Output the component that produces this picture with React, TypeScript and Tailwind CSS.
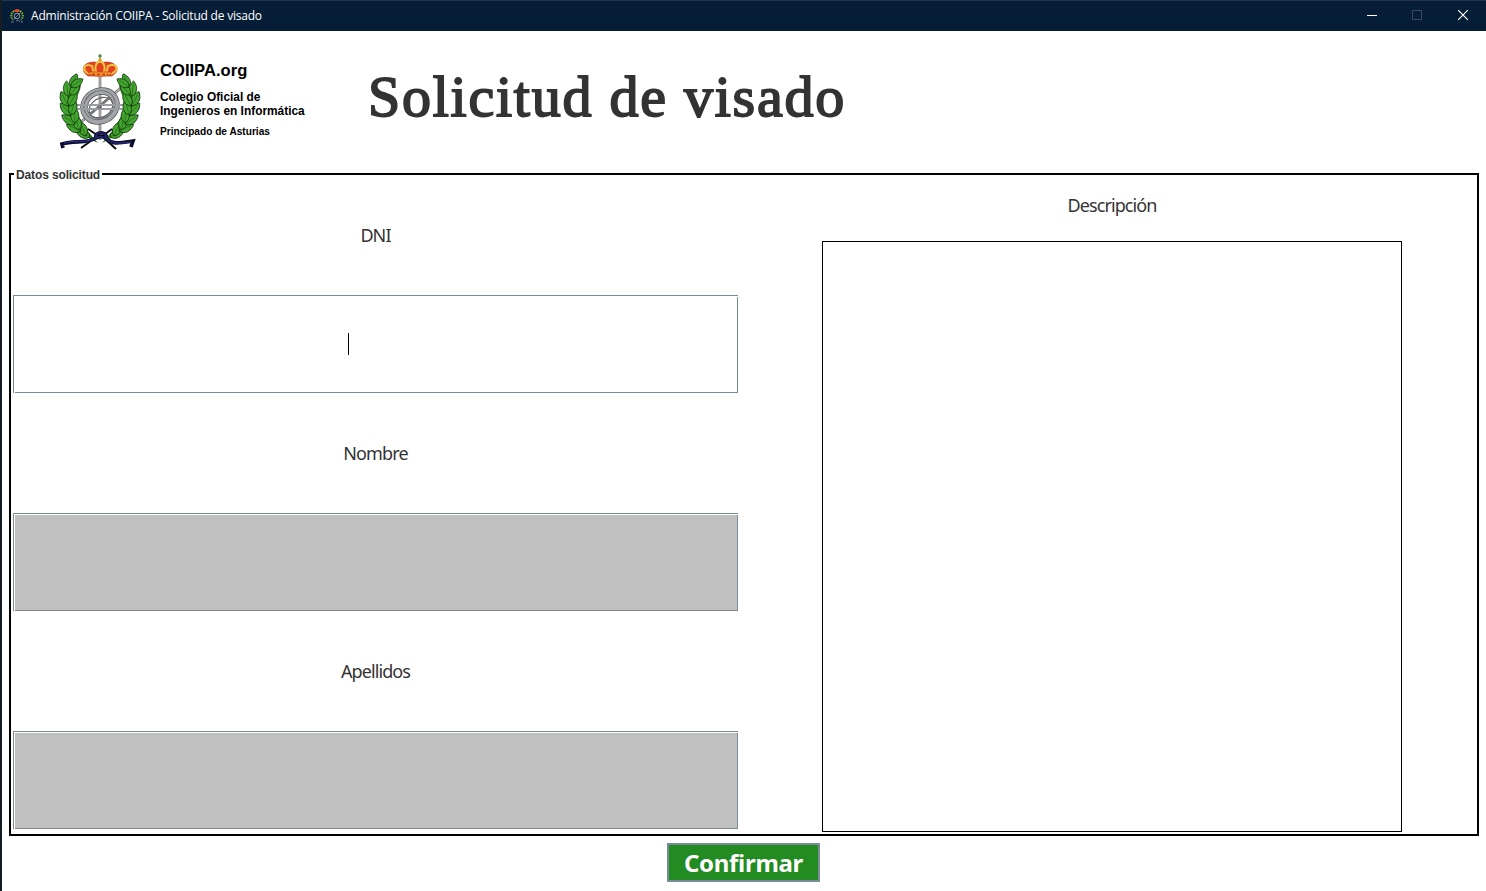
import React from "react";

const tahoma = "font-['Noto_Sans',sans-serif]";

function Leaf({ x, y, r, s = 1 }: { x: number; y: number; r: number; s?: number }) {
  return (
    <g transform={`translate(${x} ${y}) rotate(${r}) scale(${s})`}>
      <path d="M0 0C-6-4-5-11 0-16C5-11 6-4 0 0Z" fill="#43a52e" stroke="#12350e" strokeWidth="0.8" />
      <path d="M0 0V-13" stroke="#1f5f18" strokeWidth="0.6" />
    </g>
  );
}

const leaves = [
  [40, 86, -64, 1], [36, 85, -24, 1], [31, 80, -66, 1], [29, 79, -14, 1],
  [25, 73, -56, 1], [25, 72, -2, 1], [21, 64, -42, 1], [21, 64, 14, 1],
  [18, 55, -26, 1], [19, 55, 28, 1], [18, 45, -6, 0.95], [20, 44, 40, 0.95], [21, 36, 24, 0.9], [21, 36, 56, 0.9],
];

function Emblem({ className }: { className: string }) {
  const branch = (
    <g>
      <path d="M48 92C32 84 16 74 17 52Q17 36 30 27Q33 36 26 47Q24 64 41 84Z" fill="#2a7a1f" />
      {leaves.map(([x, y, r, s], i) => <Leaf key={i} x={x} y={y} r={r} s={s} />)}
    </g>
  );
  return (
    <svg viewBox="0 0 100 105" className={className} aria-hidden="true">
      <path d="M50 19V89" stroke="#666" strokeWidth="2.600" />
      <path d="M50 19V89" stroke="#c4c4c4" strokeWidth="1.200" />
      <path d="M31 71L72 36" stroke="#555" strokeWidth="2.400" />
      <path d="M31 71L72 36" stroke="#c4c4c4" strokeWidth="1.100" />
      <g transform="rotate(-30 50 55)">
        <ellipse cx="50" cy="55" rx="16.500" ry="14.500" fill="none" stroke="#55585c" strokeWidth="7.500" />
        <ellipse cx="50" cy="55" rx="16.500" ry="14.500" fill="none" stroke="#a3a5a8" strokeWidth="6" />
        <ellipse cx="50" cy="54" rx="16" ry="14" fill="none" stroke="#65686c" strokeWidth="0.900" />
        <ellipse cx="50" cy="57" rx="12.500" ry="9.500" fill="none" stroke="#606367" strokeWidth="1.200" />
      </g>
      <path d="M41 62L59 47" stroke="#777" strokeWidth="2" />
      <path d="M22 54H80M22 58H80" stroke="#6b6e71" strokeWidth="2.200" />
      <path d="M22 54H80M22 58H80" stroke="#ccced0" strokeWidth="1.200" />
      <circle cx="50" cy="56" r="2" fill="#777" />
      {branch}
      <g transform="translate(100 0) scale(-1 1)">{branch}</g>
      <path d="M38 78L50 86M62 78L51 86M45 87L31 97M54 87L66 98" fill="none" stroke="#0b0d13" strokeWidth="2" />
      <path d="M46 87C44 80 58 80 56 87C52 85 49 85 46 87C37 93 24 89 12 93L13 97M56 87C62 94 70 92 83 90L81 96" fill="none" stroke="#090b2b" strokeWidth="3.700" />
      <path d="M46 87C44 80 58 80 56 87C52 85 49 85 46 87C37 93 24 89 14 92M56 87C62 94 70 92 81 91" fill="none" stroke="#242670" strokeWidth="1.700" />
      <path d="M38 25C27 17 37 8 50 12C63 8 74 17 62 25Z" fill="#e34220" stroke="#b0451c" strokeWidth="0.700" />
      <path d="M39 23C30 18 35 12 42 15L44 23M61 23C71 18 66 12 58 15L56 23M47 23C44 18 45 12 50 10C55 12 56 18 53 23" fill="none" stroke="#f7c53f" strokeWidth="2" />
      <path d="M38 21H62L60 24Q50 27 40 24Z" fill="#f09c25" stroke="#c3401f" strokeWidth="0.700" />
      <path d="M42 23.500H58" stroke="#d5291c" strokeWidth="1.300" strokeDasharray="3 2" />
      <path d="M50 3V8M48 5H52" stroke="#3d6d28" strokeWidth="1.200" />
      <circle cx="50" cy="9" r="1.800" fill="#e5a52d" />
    </svg>
  );
}

function TitleBar() {
  return (
    <header className="flex h-[31px] shrink-0 items-center border-t border-[#22344a] bg-[#061d37] pl-[8px] text-white">
      <svg viewBox="0 0 14 16" className="h-[16px] w-[14px] shrink-0" aria-hidden="true">
        <path d="M4 3Q-1 7 3 12M10 3Q15 7 11 12" fill="none" stroke="#80b52f" strokeWidth="2" strokeDasharray="1.500 0.900" />
        <circle cx="7" cy="8" r="2.800" fill="none" stroke="#a4a8b0" strokeWidth="0.900" />
        <path d="M4 11L10 5" stroke="#9aa2ac" strokeWidth="0.700" />
        <path d="M4 2L7 1L10 2L9 4H5Z" fill="#e34c29" />
        <path d="M1 14H4M6 13L8 12L10 14M11 14H13" fill="none" stroke="#8587aa" strokeWidth="0.800" />
      </svg>
      <h1 className="ml-[7px] whitespace-nowrap font-['Open_Sans','Noto_Sans',sans-serif] text-[12px] leading-4 tracking-[-0.210px]">Administración COIIPA - Solicitud de visado</h1>
      <div className="ml-auto flex h-full pb-px">
        <button aria-label="Minimizar" className="flex w-[46px] items-center justify-center"><svg width="10" height="10"><path d="M0 4.500H10" stroke="white" /></svg></button>
        <button aria-label="Maximizar" disabled className="flex w-[44px] items-center justify-center pb-px"><svg width="10" height="10"><path d="M.5.5H9.500V9.500H.5Z" fill="none" stroke="#394b60" /></svg></button>
        <button aria-label="Cerrar" className="flex w-[47px] items-center justify-center pb-px"><svg width="10" height="10"><path d="M0 0L10 10M10 0L0 10" stroke="white" strokeWidth="1.200" /></svg></button>
      </div>
    </header>
  );
}

function Field({ label, disabled = false }: { label: string; disabled?: boolean }) {
  return (
    <label className="flex h-[218px] w-[725px] flex-col">
      <span className={`flex h-[114px] items-center justify-center pb-[6px] text-[18px] tracking-[-0.900px] ${tahoma}`}>{label}</span>
      <span className={`relative flex h-[98px] w-full items-center border border-[#7a8a99] pl-[334px] shadow-[inset_1px_1px_0_white] ${disabled ? "bg-[#c0c0c0]" : "bg-white"}`}>
        {!disabled && <span className="h-[22px] w-px bg-black" />}
        <span className="absolute top-0 -right-px h-px w-px bg-white" />
        <span className="absolute -bottom-px left-0 h-px w-px bg-white" />
      </span>
    </label>
  );
}

export default function App() {
  return (
    <div className="flex h-[891px] w-[1486px] flex-col overflow-hidden border-l-2 border-[#171d25] bg-white text-[#333]">
      <TitleBar />
      <div className="flex h-[138px] shrink-0">
        <div className="flex w-[348px] pl-[48px] pt-[20px] text-black">
          <Emblem className="h-[105px] w-[100px] shrink-0" />
          <div className="ml-[10px] pt-[11px] font-['Liberation_Sans',sans-serif] font-bold whitespace-nowrap">
            <p className="text-[16.600px] leading-[17px]">COIIPA.org</p>
            <p className="mt-[12px] text-[11.900px] leading-[13.500px]">Colegio Oficial de<br />Ingenieros en Informática</p>
            <p className="mt-[8px] text-[10.150px] leading-[11px]">Principado de Asturias</p>
          </div>
        </div>
        <h2 className="ml-[18px] mt-[31px] whitespace-nowrap font-['Liberation_Serif',serif] text-[58px] leading-[70px] tracking-[1.750px] [-webkit-text-stroke:1.800px_#333]">Solicitud de visado</h2>
      </div>
      <main className="relative ml-[7px] mt-[4px] flex h-[663px] w-[1470px] shrink-0 border-2 border-black pl-[2px] pt-[4px]">
        <span className="absolute -top-[7px] left-[3px] bg-white px-[2px] font-['Liberation_Sans',sans-serif] text-[12px] leading-[14px] font-bold tracking-[-0.130px]">Datos solicitud</span>
        <section className="w-[809px] pt-[2px]">
          <Field label="DNI" />
          <Field label="Nombre" disabled />
          <Field label="Apellidos" disabled />
        </section>
        <label className="flex w-[580px] flex-col">
          <span className={`flex h-[62px] items-center justify-center pb-[9px] text-[18px] tracking-[-0.900px] ${tahoma}`}>Descripción</span>
          <span className="h-[591px] w-full border border-black bg-white" />
        </label>
      </main>
      <div className="flex justify-center pt-[7px] pr-[1px]">
        <button className={`flex h-[39px] w-[153px] items-center justify-center border-2 border-[#7a8a99] bg-[#228b22] text-[24px] leading-none font-bold tracking-[-0.300px] text-white ${tahoma}`}>Confirmar</button>
      </div>
    </div>
  );
}
